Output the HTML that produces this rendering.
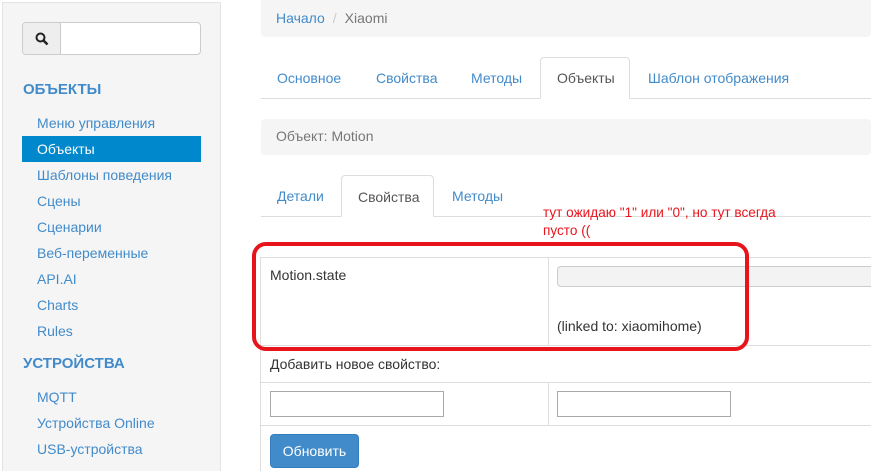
<!DOCTYPE html>
<html style="width:871px;height:471px;overflow:hidden"><head><meta charset="utf-8"><style>
*{box-sizing:border-box;margin:0;padding:0}
body{width:871px;height:471px;overflow:hidden;background:#fff;font-family:"Liberation Sans",Arial,sans-serif;font-size:14px;color:#333;position:relative}
.a{position:absolute}
.side{left:2px;top:2px;width:219px;height:469px;background:#f5f5f5;border:1px solid #e3e3e3;border-bottom:none}
.lnk{color:#428bca}
.nav{left:22px;width:179px;height:26px;padding-left:15px;line-height:26px;color:#428bca}
.hd{color:#428bca;font-weight:bold;font-size:15px;left:23px}
.tab{height:41px;line-height:40px;padding:0 16px;color:#428bca}
.act{background:#fff;border:1px solid #ddd;border-bottom-color:#fff;color:#555;border-radius:4px 4px 0 0}
.red{color:#e8141c;font-size:13.6px;left:543px;line-height:20px}
</style></head><body>
<div class="a side"></div>
<div class="a" style="left:22px;top:22px;width:179px;height:33px;border:1px solid #ccc;border-radius:4px;background:#fff"></div>
<div class="a" style="left:23px;top:23px;width:38px;height:31px;background:#eee;border-right:1px solid #ccc;border-radius:3px 0 0 3px"></div>
<svg class="a" style="left:35px;top:32px" width="14" height="14" viewBox="0 0 14 14"><circle cx="5.5" cy="5.5" r="4" fill="none" stroke="#222" stroke-width="2"/><line x1="8.5" y1="8.5" x2="12.5" y2="12.5" stroke="#222" stroke-width="2.5"/></svg>
<div class="a hd" style="top:81px">ОБЪЕКТЫ</div>
<div class="a nav" style="top:110px">Меню управления</div>
<div class="a nav" style="top:136px;background:#0088cc;color:#fff">Объекты</div>
<div class="a nav" style="top:162px">Шаблоны поведения</div>
<div class="a nav" style="top:188px">Сцены</div>
<div class="a nav" style="top:214px">Сценарии</div>
<div class="a nav" style="top:240px">Веб-переменные</div>
<div class="a nav" style="top:266px">API.AI</div>
<div class="a nav" style="top:292px">Charts</div>
<div class="a nav" style="top:318px">Rules</div>
<div class="a hd" style="top:355px">УСТРОЙСТВА</div>
<div class="a nav" style="top:384px">MQTT</div>
<div class="a nav" style="top:410px">Устройства Online</div>
<div class="a nav" style="top:436px">USB-устройства</div>

<div class="a" style="left:261px;top:0;width:610px;height:37px;background:#f5f5f5;border-radius:0 0 4px 4px;padding:10px 15px;line-height:17px"><span class="lnk">Начало</span><span style="color:#ccc;padding:0 8px">/</span><span style="color:#777">Xiaomi</span></div>
<div class="a" style="left:261px;top:98px;width:610px;border-top:1px solid #ddd"></div>
<div class="a tab" style="left:261px;top:58px">Основное</div>
<div class="a tab" style="left:360px;top:58px">Свойства</div>
<div class="a tab" style="left:455px;top:58px">Методы</div>
<div class="a tab act" style="left:540px;top:57px;width:90px;height:42px;line-height:41px">Объекты</div>
<div class="a tab" style="left:632px;top:58px">Шаблон отображения</div>

<div class="a" style="left:261px;top:119px;width:610px;height:36px;background:#f5f5f5;border-radius:4px;padding:9px 15px;color:#777;line-height:17px">Объект: Motion</div>

<div class="a" style="left:261px;top:216px;width:610px;border-top:1px solid #ddd"></div>
<div class="a tab" style="left:261px;top:176px">Детали</div>
<div class="a tab act" style="left:341px;top:175px;width:93px;height:42px;line-height:42px">Свойства</div>
<div class="a tab" style="left:436px;top:176px">Методы</div>

<div class="a" style="left:260px;top:257px;width:611px;height:214px;border-left:1px solid #ddd;border-top:1px solid #ddd"></div>
<div class="a" style="left:260px;top:345px;width:611px;border-top:1px solid #ddd"></div>
<div class="a" style="left:260px;top:382px;width:611px;border-top:1px solid #ddd"></div>
<div class="a" style="left:260px;top:425px;width:611px;border-top:1px solid #ddd"></div>
<div class="a" style="left:548px;top:257px;height:88px;border-left:1px solid #ddd"></div>
<div class="a" style="left:548px;top:382px;height:43px;border-left:1px solid #ddd"></div>
<div class="a" style="left:270px;top:267px">Motion.state</div>
<div class="a" style="left:557px;top:266px;width:314px;height:21px;background:#f3f3f3;border:1px solid #ccc;border-right:none;border-radius:4px 0 0 4px"></div>
<div class="a" style="left:557px;top:318px">(linked to: xiaomihome)</div>
<div class="a" style="left:270px;top:356px">Добавить новое свойство:</div>
<div class="a" style="left:270px;top:391px;width:174px;height:26px;border:1px solid #aaa"></div>
<div class="a" style="left:557px;top:391px;width:174px;height:26px;border:1px solid #aaa"></div>
<div class="a" style="left:270px;top:434px;width:89px;height:34px;background:#428bca;border:1px solid #357ebd;border-radius:4px;color:#fff;text-align:center;line-height:32px">Обновить</div>

<div class="a" style="left:252px;top:242px;width:497px;height:109px;border:4px solid #e8141c;border-radius:14px"></div>
<div class="a red" style="top:203px">тут ожидаю "1" или "0", но тут всегда</div>
<div class="a red" style="top:221px">пусто ((</div>
</body></html>
